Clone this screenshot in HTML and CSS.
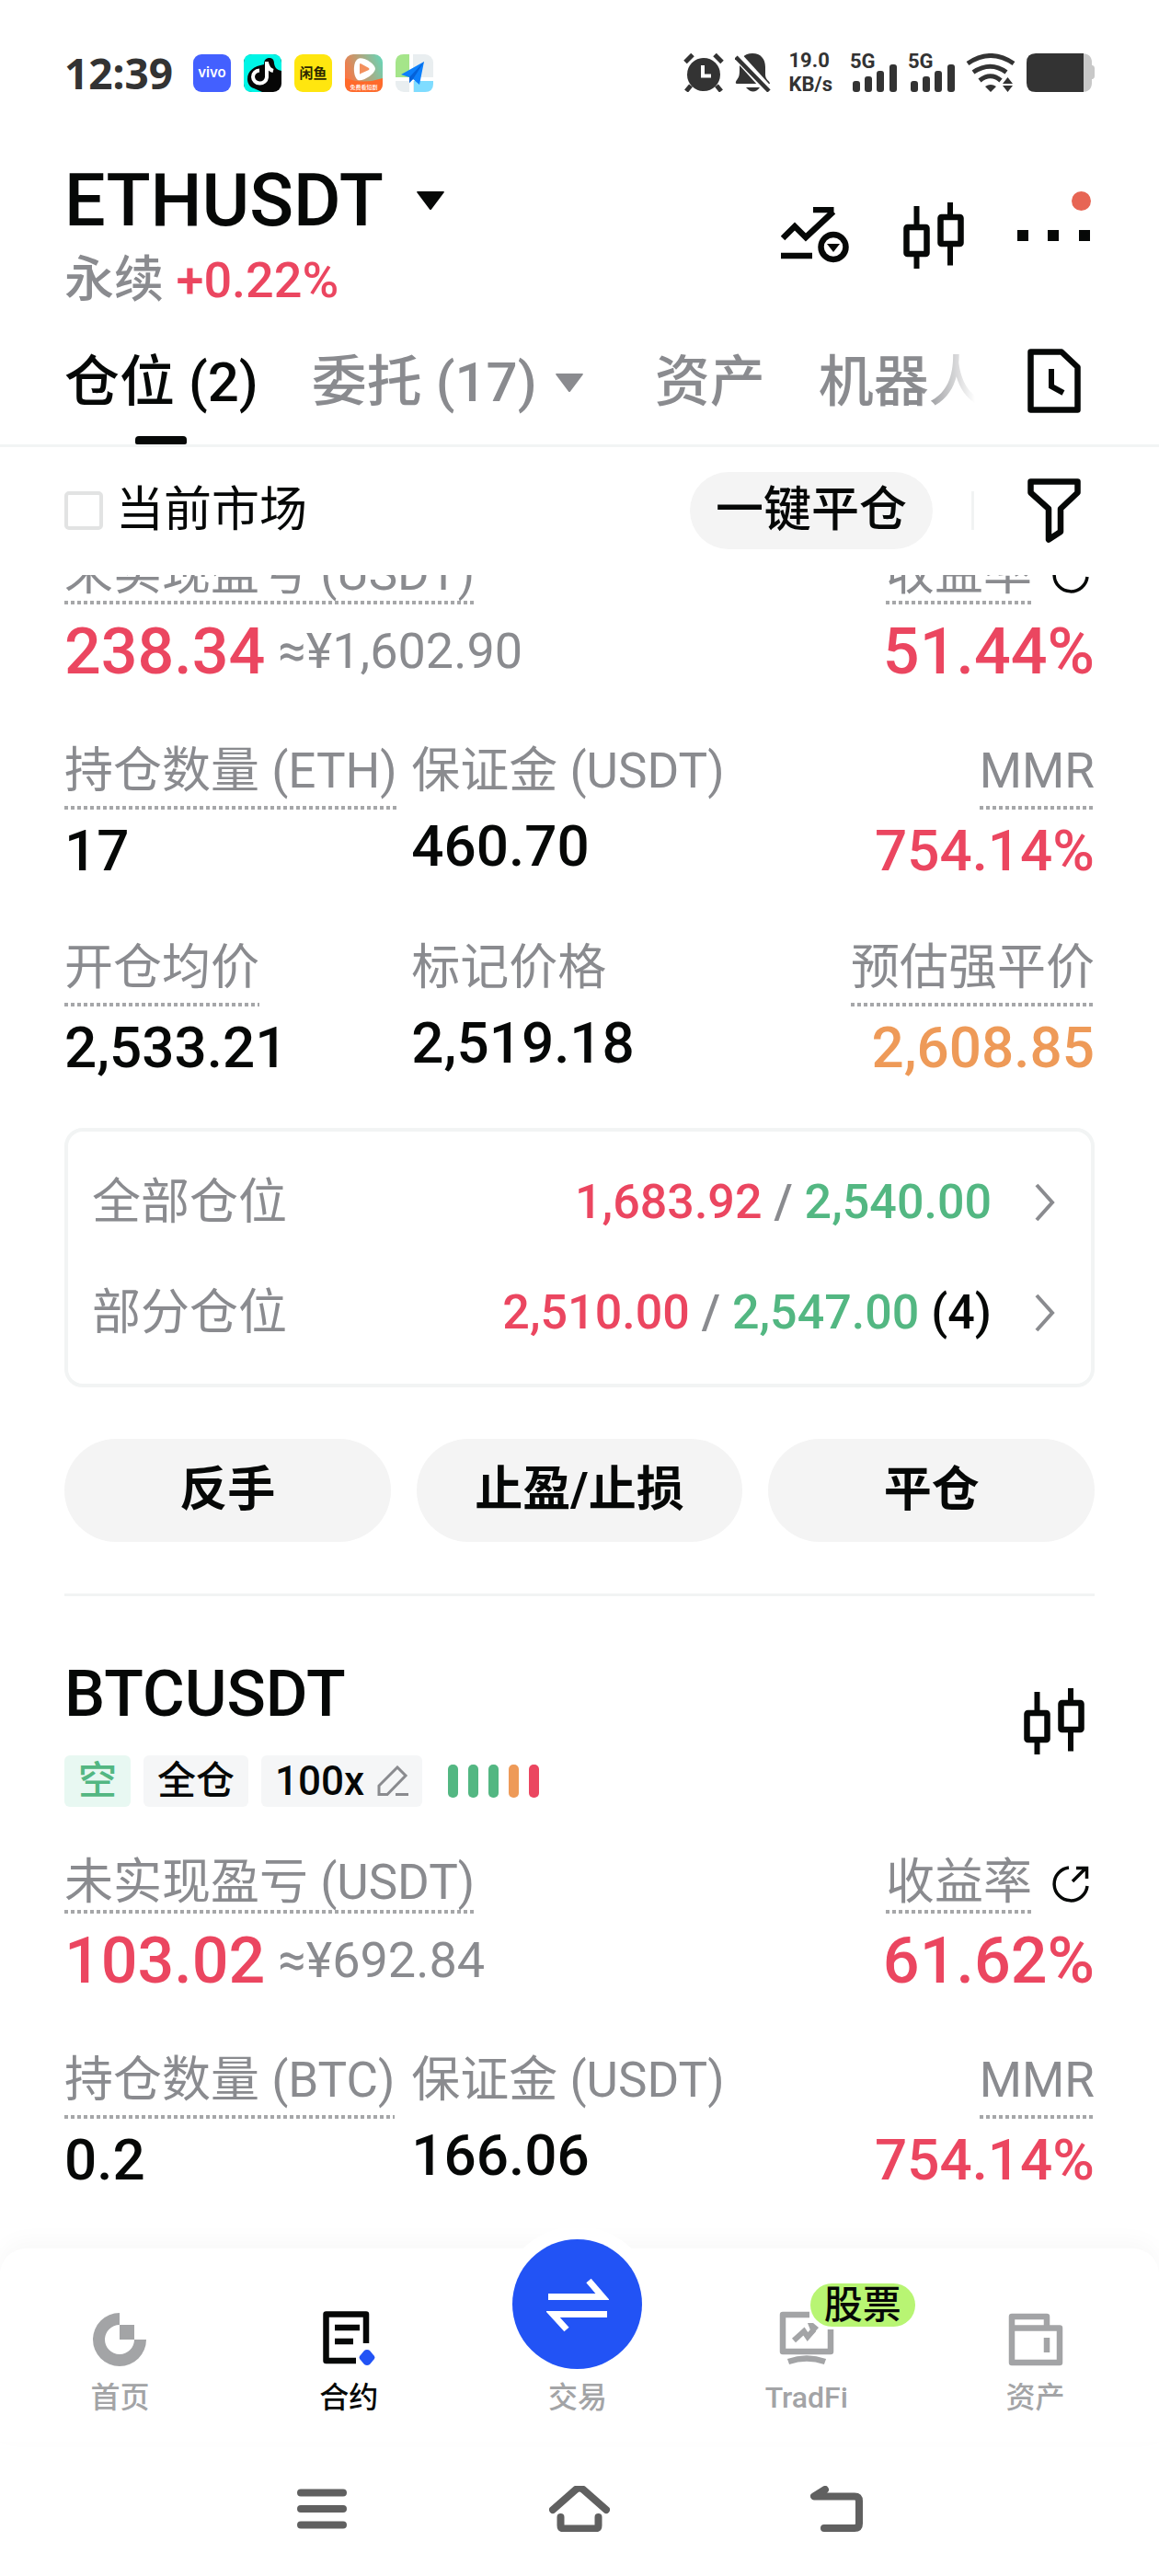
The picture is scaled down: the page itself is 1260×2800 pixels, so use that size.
FILE: index.html
```html
<!DOCTYPE html>
<html lang="zh-CN">
  <head>
    <meta charset="UTF-8" />
    <meta name="viewport" content="width=device-width, initial-scale=1" />
    <title>ETHUSDT</title>
    <link rel="stylesheet" href="styles.css">
  </head>

  <body>
    <!-- 公用图标 -->
    <svg class="defs" width="0" height="0" aria-hidden="true">
      <symbol id="icon-candle" viewBox="0 0 66 72">
        <path d="M14.500 4v21M14.500 58v14M51 0v15M51 47v21.500" fill="none" stroke="currentColor" stroke-width="6" />
        <rect x="3.500" y="27" width="22" height="29" rx="1" fill="none" stroke="currentColor" stroke-width="6.500" />
        <rect x="40.500" y="16" width="22" height="29" rx="1" fill="none" stroke="currentColor" stroke-width="6.500" />
      </symbol>
      <symbol id="icon-share" viewBox="0 0 40 40">
        <path d="M18 2A18 18 0 1 0 38 22" fill="none" stroke="currentColor" stroke-width="3.500" />
        <path d="M22 17L36 3M26 2.500H37.500V14" fill="none" stroke="currentColor" stroke-width="3.500" />
      </symbol>
      <symbol id="icon-arrow" viewBox="0 0 24 42">
        <path d="M3 2l17 19L3 40" fill="none" stroke="currentColor" stroke-width="4" />
      </symbol>
      <symbol id="icon-caret" viewBox="0 0 30 20">
        <path d="M1 0h28q1.500 0 .500 1.500L16 19.500q-1 1-2 0L.500 1.500Q-.500 0 1 0z" fill="currentColor" />
      </symbol>
      <symbol id="icon-signal" viewBox="0 0 48 30">
        <rect x="0" y="18" width="8" height="12" rx="3" />
        <rect x="13" y="13" width="8" height="17" rx="3" />
        <rect x="26" y="7" width="8" height="23" rx="3" />
        <rect x="40" y="0" width="8" height="30" rx="3" />
      </symbol>
    </svg>

    <div class="app">
      <!-- 状态栏 -->
      <div class="status-bar">
        <div class="status-left">
          <span class="time">12:39</span>
          <svg class="app-icon" viewBox="0 0 41 41">
            <rect width="41" height="41" rx="9" fill="#4360ff" />
            <text x="20.500" y="25" class="txt-vivo">vivo</text>
          </svg>
          <svg class="app-icon" viewBox="0 0 41 41">
            <rect width="41" height="41" rx="9" fill="#060606" />
            <path d="M9 0h23q9 0 9 9v9c-5-1-7-3-8-8 0-4-2-6-5-6-4 0-6 2-6 7C11 13 4 18 4 27c0 5 3 9 7 10l9 4H9q-9 0-9-9V9q0-9 9-9z" fill="#00f5e6" />
            <path d="M25 8v17a7.500 7 0 1 1-8-7.500M25 9c1 5 3 8 7 9" fill="none" stroke="#fff" stroke-width="4" />
          </svg>
          <svg class="app-icon" viewBox="0 0 41 41">
            <rect width="41" height="41" rx="9" fill="#ffe60f" />
            <text x="20.500" y="26" class="txt-fish">闲鱼</text>
          </svg>
          <svg class="app-icon" viewBox="0 0 41 41">
            <defs>
              <linearGradient id="g-video" x1="0" y1="0.600" x2="1" y2="0.200">
                <stop offset="0" stop-color="#ff7340" />
                <stop offset="1" stop-color="#6bd3b5" />
              </linearGradient>
            </defs>
            <rect width="41" height="41" rx="9" fill="url(#g-video)" />
            <path d="M0 26q20 7 41 0v6q0 9-9 9H9q-9 0-9-9z" fill="#ff6a2b" />
            <path d="M14 5c-6 4-5 20 0 23 5 2 18-6 19-12C33 10 19 2 14 5z" fill="#fff" />
            <path d="M16 11v10q0 1 1 0l9-4q1-1 0-2l-9-5q-1 0-1 1z" fill="#f3905e" />
            <text x="20.500" y="38" class="txt-drama">免费看短剧</text>
          </svg>
          <svg class="app-icon" viewBox="0 0 41 41">
            <rect width="41" height="41" rx="9" fill="#e9eef0" />
            <path d="M9 0h7v25H0V9q0-9 9-9z" fill="#a5e58a" />
            <path d="M20 29h21v3q0 9-9 9H20z" fill="#7fdcff" />
            <path d="M17 0v41M0 27h41" stroke="#fff" stroke-width="4" />
            <path d="M31 8L6 22l9 3v6l4-4 7 6z" fill="#0d80fb" />
            <path d="M31 8L15 25v6l4-4z" fill="#0561d8" />
          </svg>
        </div>
        <div class="status-right">
          <svg width="44" height="42" viewBox="0 0 44 42">
            <circle cx="22" cy="23" r="18" />
            <path d="M2 9.500l8-8M42 9.500l-8-8M8 35l-5 6M36 35l5 6" stroke="#333" stroke-width="5" />
            <path d="M21 13v11.500h9" fill="none" stroke="#fff" stroke-width="4" />
          </svg>
          <svg width="40" height="42" viewBox="0 0 40 42">
            <path d="M19 0c9 0 14 6 14 15v8c0 6 5 7 5 10H2c-2 0-1-3 0-4 3-4 3-6 3-14C5 6 10 0 19 0z" />
            <path d="M12 37h15q-7 9-15 0z" />
            <path d="M0 0l40 44" stroke="#fff" stroke-width="10" />
            <path d="M1 4l36 37" stroke="#333" stroke-width="4.500" />
          </svg>
          <div class="speed"><span>19.0</span><span>KB/s</span></div>
          <div class="signal"><span>5G</span><svg width="48" height="30"><use href="#icon-signal" /></svg></div>
          <div class="signal"><span>5G</span><svg width="48" height="30"><use href="#icon-signal" /></svg></div>
          <svg width="54" height="42" viewBox="0 0 54 42">
            <path d="M2 11Q27-6 52 11M8 20.500Q27 8 44 20.500M15 29.500Q27 20 38 29.500" fill="none" stroke="#333" stroke-width="5" />
            <path d="M21 36q6-4 12 0l-6 6zM40 33l5.500-7 5.500 7zM40 35h11l-5.500 7z" />
          </svg>
          <svg width="74" height="42" viewBox="0 0 74 42">
            <path d="M60 0q11 0 11 10v3h1q2 1 2 3v9q0 2-2 3h-1v4q0 10-11 10z" fill="#c8c8c8" />
            <path d="M10 0h52v42H10Q0 42 0 32V10Q0 0 10 0z" />
          </svg>
        </div>
      </div>

      <!-- 交易对 -->
      <header class="pair-header">
        <div class="pair">
          <button class="pair-name">ETHUSDT <svg width="30" height="20"><use href="#icon-caret" /></svg></button>
          <div class="pair-sub">永续 <span class="red">+0.22%</span></div>
        </div>
        <div class="pair-tools">
          <button class="icon-btn" aria-label="走势">
            <svg width="75" height="62" viewBox="0 0 75 62">
              <path d="M2 34l13-13 12 12L57 5M35 3h22.500M0 53h34" fill="none" stroke="currentColor" stroke-width="6.500" />
              <circle cx="57" cy="43.500" r="13.500" fill="none" stroke="currentColor" stroke-width="6.500" />
              <path d="M50 40h14l-7 9z" fill="currentColor" />
            </svg>
          </button>
          <button class="icon-btn" aria-label="K线"><svg width="66" height="72"><use href="#icon-candle" /></svg></button>
          <button class="icon-btn more" aria-label="更多">
            <svg width="80" height="12" viewBox="0 0 80 12"><path d="M0 0h12v12H0zM33 0h12v12H33zM67 0h12v12H67z" fill="currentColor" /></svg>
          </button>
        </div>
      </header>

      <div class="tabs-row">
        <div class="tabs">
          <button class="tab active">仓位 (2)</button>
          <button class="tab tab-more">委托 (17) <svg width="30" height="20"><use href="#icon-caret" /></svg></button>
          <button class="tab">资产</button>
          <button class="tab">机器人</button>
        </div>
        <button class="icon-btn" aria-label="历史">
          <svg width="58" height="70" viewBox="0 0 58 70">
            <path d="M3.500 3.500H37L54.500 20V66.500H3.500z" fill="none" stroke="currentColor" stroke-width="6.500" stroke-linejoin="round" />
            <path d="M26 22v19l13 7" fill="none" stroke="currentColor" stroke-width="6" />
          </svg>
        </button>
      </div>

      <div class="filter-row">
        <label class="check"><input type="checkbox" />当前市场</label>
        <div class="filter-right">
          <button class="close-all">一键平仓</button>
          <i class="split"></i>
          <button class="icon-btn" aria-label="筛选">
            <svg width="58" height="70" viewBox="0 0 58 70">
              <path d="M3.500 3.500h51v12L36 33v25l-13 8.500V33L3.500 15.500z" fill="none" stroke="currentColor" stroke-width="6.500" stroke-linejoin="round" />
            </svg>
          </button>
        </div>
      </div>

      <!-- 仓位列表 -->
      <main class="positions">
        <div class="position-list">
          <section class="position">
            <div class="summary">
              <div>
                <div class="label dotted">未实现盈亏 (USDT)</div>
                <div class="pnl"><span class="big red">238.34</span><span class="cny">≈¥1,602.90</span></div>
              </div>
              <div class="right">
                <div class="rate-label">
                  <div class="label dotted">收益率</div>
                  <button class="icon-btn" aria-label="分享"><svg width="40" height="40"><use href="#icon-share" /></svg></button>
                </div>
                <div class="pnl"><span class="big red">51.44%</span></div>
              </div>
            </div>
            <div class="fields">
              <div class="field">
                <div class="label dotted low">持仓数量 (ETH)</div>
                <div class="value">17</div>
              </div>
              <div class="field plain">
                <div class="label">保证金 (USDT)</div>
                <div class="value">460.70</div>
              </div>
              <div class="field right">
                <div class="label dotted low">MMR</div>
                <div class="value red">754.14%</div>
              </div>
              <div class="field">
                <div class="label dotted low">开仓均价</div>
                <div class="value">2,533.21</div>
              </div>
              <div class="field plain">
                <div class="label">标记价格</div>
                <div class="value">2,519.18</div>
              </div>
              <div class="field right">
                <div class="label dotted low">预估强平价</div>
                <div class="value orange">2,608.85</div>
              </div>
            </div>
            <div class="tpsl">
              <a class="tpsl-row" href="#">
                <span class="label">全部仓位</span>
                <span class="tpsl-value"><span class="red">1,683.92</span> / <span class="green">2,540.00</span></span>
                <svg width="24" height="42"><use href="#icon-arrow" /></svg>
              </a>
              <a class="tpsl-row" href="#">
                <span class="label">部分仓位</span>
                <span class="tpsl-value"><span class="red">2,510.00</span> / <span class="green">2,547.00</span> <span class="count">(4)</span></span>
                <svg width="24" height="42"><use href="#icon-arrow" /></svg>
              </a>
            </div>
            <div class="actions">
              <button>反手</button>
              <button>止盈/止损</button>
              <button>平仓</button>
            </div>
          </section>

          <section class="position">
            <div class="position-head">
              <div>
                <h2>BTCUSDT</h2>
                <div class="tags">
                  <span class="tag tag-short">空</span>
                  <span class="tag">全仓</span>
                  <button class="tag tag-lever">100x
                    <svg width="34" height="34" viewBox="0 0 34 34">
                      <path d="M2 31.500V22L22 2l9 9L11 31.500zM20 31.500h14" fill="none" stroke="#8a8b8f" stroke-width="3" />
                    </svg>
                  </button>
                  <div class="risk"><i></i><i></i><i></i><i class="mid"></i><i class="high"></i></div>
                </div>
              </div>
              <button class="icon-btn head-candle" aria-label="K线"><svg width="66" height="72"><use href="#icon-candle" /></svg></button>
            </div>
            <div class="summary">
              <div>
                <div class="label dotted">未实现盈亏 (USDT)</div>
                <div class="pnl"><span class="big red">103.02</span><span class="cny">≈¥692.84</span></div>
              </div>
              <div class="right">
                <div class="rate-label">
                  <div class="label dotted">收益率</div>
                  <button class="icon-btn" aria-label="分享"><svg width="40" height="40"><use href="#icon-share" /></svg></button>
                </div>
                <div class="pnl"><span class="big red">61.62%</span></div>
              </div>
            </div>
            <div class="fields">
              <div class="field">
                <div class="label dotted low">持仓数量 (BTC)</div>
                <div class="value">0.2</div>
              </div>
              <div class="field plain">
                <div class="label">保证金 (USDT)</div>
                <div class="value">166.06</div>
              </div>
              <div class="field right">
                <div class="label dotted low">MMR</div>
                <div class="value red">754.14%</div>
              </div>
            </div>
          </section>
        </div>
      </main>

      <!-- 底部导航 -->
      <nav class="tab-bar">
        <a class="bar-item" href="#">
          <svg width="60" height="60" viewBox="0 0 60 60">
            <path d="M30 2A29 29 0 1 0 59 31H46A16 16 0 1 1 30 15z" fill="currentColor" />
            <path d="M30 15h16v16H30z" fill="currentColor" />
          </svg>
          <span>首页</span>
        </a>
        <a class="bar-item current" href="#">
          <svg width="60" height="60" viewBox="0 0 60 60">
            <path d="M49 35V3.500H5.500V54H38M15 18h27M15 33h20" fill="none" stroke="currentColor" stroke-width="6.500" stroke-linejoin="round" />
            <path d="M50 42q2 0 3 1l5 6q1 1.500 0 3l-5 6q-3 2-6 0l-5-6q-1-1.500 0-3l5-6q1-1 3-1z" fill="#2253f5" />
          </svg>
          <span>合约</span>
        </a>
        <a class="bar-item" href="#">
          <div class="trade-circle">
            <svg width="68" height="60" viewBox="0 0 68 60">
              <path d="M2 21.500h59L46 4M66 40.500H7L22 57" fill="none" stroke="#fff" stroke-width="7" />
            </svg>
          </div>
          <span>交易</span>
        </a>
        <a class="bar-item" href="#">
          <div class="trad">
            <svg width="60" height="60" viewBox="0 0 60 60">
              <path d="M33 4H4v40h52V20" fill="none" stroke="currentColor" stroke-width="6.500" stroke-linejoin="round" />
              <path d="M10 55q20-7 40 0" fill="none" stroke="currentColor" stroke-width="6.500" />
              <path d="M16 32l11-10 4 6 7-8" fill="none" stroke="currentColor" stroke-width="6" />
              <path d="M31 13h6l6 5-7 8z" fill="currentColor" />
            </svg>
            <span class="badge">股票</span>
          </div>
          <span>TradFi</span>
        </a>
        <a class="bar-item" href="#">
          <svg width="60" height="60" viewBox="0 0 60 60">
            <path d="M4 18V6h38v13M4 18.500h52V56H4z" fill="none" stroke="currentColor" stroke-width="6.500" stroke-linejoin="round" />
            <path d="M42 29v16" stroke="currentColor" stroke-width="6.500" />
          </svg>
          <span>资产</span>
        </a>
      </nav>

      <div class="system-bar">
        <button class="icon-btn" aria-label="菜单">
          <svg width="54" height="44" viewBox="0 0 54 44"><path d="M4 4.500h46M4 22h46M4 39.500h46" /></svg>
        </button>
        <button class="icon-btn" aria-label="主页">
          <svg width="66" height="50" viewBox="0 0 66 50"><path d="M4 26L29 4q4-3 8 0l25 22M12.500 34v9q0 3.500 4 3.500h33q4 0 4-3.500v-9" /></svg>
        </button>
        <button class="icon-btn" aria-label="返回">
          <svg width="58" height="50" viewBox="0 0 58 50"><path d="M16 4L4 11.500H48q5 0 5 5V41q0 5-5 5H15" /></svg>
        </button>
      </div>
    </div>
  </body>
</html>
```
FILE: styles.css
```css
* {
  margin: 0;
  padding: 0;
  box-sizing: border-box;
}
body {
  font-family: Roboto, 'Noto Sans CJK SC', sans-serif;
  font-size: 52px;
  line-height: 60px;
  color: #060807;
  background: #fff;
}
button {
  font: inherit;
  color: inherit;
  border: none;
  background: none;
}
a {
  color: inherit;
  text-decoration: none;
}
svg {
  display: block;
  flex: none;
}
.defs {
  position: absolute;
}
.red {
  color: #eb4660;
}
.green {
  color: #53b782;
}
.orange {
  color: #ee9a58;
}
.icon-btn {
  display: flex;
  justify-content: center;
}
.app {
  display: flex;
  flex-direction: column;
  height: 100vh;
}

/* 状态栏 */
.status-bar {
  display: flex;
  justify-content: space-between;
  padding: 58px 70px 0;
  height: 100px;
  font-weight: 700;
  color: #333;
}
.status-left {
  display: flex;
  align-items: center;
  gap: 14px;
}
.time {
  margin-right: 8px;
  font-family: 'Noto Sans', sans-serif;
  font-size: 46px;
  line-height: 42px;
}
.app-icon {
  width: 41px;
  height: 41px;
}
.app-icon text {
  text-anchor: middle;
}
.txt-vivo {
  font: 600 15px Inter, sans-serif;
  fill: #fff;
}
.txt-fish {
  font: 700 15px 'Noto Sans CJK SC', sans-serif;
  fill: #2b2600;
}
.txt-drama {
  font: 500 6px 'Noto Sans CJK SC', sans-serif;
  fill: #fff;
}
.status-right {
  display: flex;
  align-items: center;
  gap: 12px;
  fill: #333;
}
.speed {
  display: flex;
  flex-direction: column;
  margin: 0 7px;
  font-size: 22px;
  line-height: 26px;
}
.signal {
  display: grid;
  height: 42px;
  font-size: 22px;
  line-height: 18px;
}
.signal > * {
  grid-area: 1 / 1;
}
.signal svg {
  align-self: end;
  margin-left: 3px;
}

/* 交易对 */
.pair-header {
  display: flex;
  justify-content: space-between;
  padding: 74px 74px 0 70px;
}
.pair-name {
  display: flex;
  align-items: center;
  gap: 36px;
  font-size: 79px;
  font-weight: 500;
  line-height: 88px;
}
.pair-sub {
  margin-top: 13px;
  font-size: 54px;
  font-weight: 500;
  color: #8a8b8f;
}
.pair-tools {
  display: flex;
  align-items: center;
  gap: 58px;
  height: 72px;
  margin-top: 46px;
}
.more {
  position: relative;
}
.more::after {
  content: '';
  position: absolute;
  right: 0;
  bottom: 33px;
  width: 21px;
  height: 21px;
  border-radius: 50%;
  background: #e76554;
}
.tabs-row {
  display: flex;
  justify-content: space-between;
  align-items: flex-start;
  padding: 44px 85px 0 70px;
  border-bottom: 3px solid #f2f4f4;
}
.tabs {
  display: flex;
  gap: 58px;
  flex: 1;
  min-width: 0;
  margin-right: 57px;
  overflow: hidden;
  mask-image: linear-gradient(to right, #000 calc(100% - 60px), transparent);
}
.tab {
  position: relative;
  flex: none;
  padding-bottom: 30px;
  font-size: 60px;
  font-weight: 500;
  line-height: 74px;
  color: #8a8b8f;
}
.tab.active {
  color: #060807;
}
.tab.active::after {
  content: '';
  position: absolute;
  left: 50%;
  bottom: 0;
  width: 56px;
  height: 9px;
  margin-left: -28px;
  border-radius: 4px 4px 2px 2px;
  background: #060807;
}
.tab-more {
  display: flex;
  align-items: center;
  gap: 20px;
  padding-right: 20px;
}
.filter-row {
  display: flex;
  justify-content: space-between;
  align-items: center;
  padding: 27px 85px 28px 70px;
}
.check {
  display: flex;
  align-items: center;
  gap: 14px;
}
.check input {
  appearance: none;
  width: 42px;
  height: 42px;
  border: 4px solid #e2e3e3;
  border-radius: 5px;
}
.filter-right {
  display: flex;
  align-items: center;
}
.close-all {
  height: 84px;
  padding: 0 28px;
  border-radius: 42px;
  font-weight: 500;
  background: #f4f4f4;
}
.split {
  width: 3px;
  height: 42px;
  margin: 0 58px 0 42px;
  background: #f1f3f3;
}

/* 仓位列表 */
.positions {
  flex: 1;
  min-height: 0;
  overflow: hidden;
}
/* 列表已向上滚动 */
.position-list {
  margin-top: -32px;
  padding: 0 70px;
}
.position + .position {
  margin-top: 56px;
  padding-top: 66px;
  border-top: 3px solid #f2f4f4;
}
.label {
  font-size: 53px;
  color: #8a8b8f;
}
.dotted {
  width: fit-content;
  padding-bottom: 4px;
  background: repeating-linear-gradient(to right, #a6a7a9 0 4px, transparent 4px 7px) left bottom / 100% 4px no-repeat;
}
.dotted.low {
  padding-bottom: 12px;
}
.summary {
  display: flex;
  justify-content: space-between;
}
.right {
  display: flex;
  flex-direction: column;
  align-items: flex-end;
}
.rate-label {
  display: flex;
  align-items: center;
  gap: 22px;
  padding-right: 6px;
}
.pnl {
  display: flex;
  align-items: center;
  gap: 14px;
  margin-top: 15px;
}
.big {
  font-size: 70px;
  font-weight: 500;
  line-height: 72px;
}
.cny {
  font-size: 54px;
  color: #8a8b8f;
}
.fields {
  display: grid;
  grid-template-columns: repeat(3, minmax(0, 1fr));
  gap: 65px 12px;
  margin-top: 64px;
  white-space: nowrap;
}
.value {
  margin-top: 13px;
  font-size: 62px;
  font-weight: 500;
  line-height: 64px;
}
.plain .value {
  margin-top: 20px;
}
.tpsl {
  display: flex;
  flex-direction: column;
  gap: 60px;
  margin-top: 55px;
  padding: 47px 38px 47px 26px;
  border: 4px solid #f2f4f4;
  border-radius: 20px;
}
.tpsl-row {
  display: flex;
  align-items: center;
  color: #8a8b8f;
}
.tpsl-value {
  margin-left: auto;
  margin-right: 46px;
  font-weight: 500;
}
.count {
  color: #060807;
}
.actions {
  display: grid;
  grid-template-columns: repeat(3, 1fr);
  gap: 28px;
  margin-top: 56px;
}
.actions button {
  height: 112px;
  border-radius: 56px;
  font-weight: 700;
  background: #f4f4f4;
}
.position-head {
  display: flex;
  justify-content: space-between;
  align-items: flex-start;
  margin-bottom: 52px;
}
.position-head h2 {
  font-size: 70px;
  font-weight: 500;
  line-height: 80px;
}
.head-candle {
  margin: 34px 11px 0 0;
}
.tags {
  display: flex;
  align-items: center;
  gap: 14px;
  margin-top: 27px;
}
.tag {
  height: 56px;
  padding: 0 15px;
  border-radius: 6px;
  font-size: 42px;
  font-weight: 500;
  line-height: 56px;
  background: #f5f6f7;
}
.tag-short {
  color: #53b782;
  background: #e8f8f2;
}
.tag-lever {
  display: flex;
  align-items: center;
  gap: 14px;
  font-size: 44px;
}
.risk {
  display: flex;
  gap: 11px;
  margin-left: 14px;
}
.risk i {
  width: 11px;
  height: 36px;
  border-radius: 5px;
  background: #53b782;
}
.risk .mid {
  background: #ee9a58;
}
.risk .high {
  background: #eb4660;
}

/* 底部导航 */
.tab-bar {
  position: relative;
  display: grid;
  grid-template-columns: repeat(5, 1fr);
  padding: 68px 10px 28px 6px;
  border-radius: 28px 28px 0 0;
  background: #fff;
  box-shadow: 0 -8px 24px rgba(0, 0, 0, 0.03);
}
.bar-item {
  display: flex;
  flex-direction: column;
  justify-content: space-between;
  align-items: center;
  height: 114px;
  font-size: 32px;
  font-weight: 500;
  line-height: 40px;
  color: #a3a4a6;
}
.bar-item.current {
  color: #060807;
}
.trade-circle {
  display: flex;
  align-items: center;
  justify-content: center;
  width: 141px;
  height: 141px;
  margin-top: -78px;
  border-radius: 50%;
  background: #2253f5;
  box-shadow: 0 0 0 14px #fff;
}
.trad {
  position: relative;
}
.badge {
  position: absolute;
  left: 34px;
  bottom: 43px;
  padding: 0 15px;
  border-radius: 24px;
  font-size: 42px;
  line-height: 47px;
  white-space: nowrap;
  color: #060807;
  background: #b8f573;
}
.system-bar {
  display: grid;
  grid-template-columns: repeat(3, 1fr);
  align-items: center;
  padding: 0 210px;
  height: 146px;
  background: #fff;
}
.system-bar path {
  fill: none;
  stroke: #606060;
  stroke-width: 8;
  stroke-linecap: round;
  stroke-linejoin: round;
}
```
